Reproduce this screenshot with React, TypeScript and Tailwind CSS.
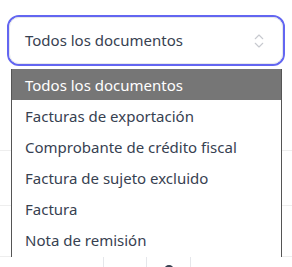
import { ChevronsUpDown } from 'lucide-react';

const options = [
  'Todos los documentos',
  'Facturas de exportación',
  'Comprobante de crédito fiscal',
  'Factura de sujeto excluido',
  'Factura',
  'Nota de remisión',
];

export default function App() {
  return (
    <div className="relative h-[267px] w-[292px] overflow-hidden bg-white font-['Noto_Sans',sans-serif]">
      <div className="pt-[15px] px-[7px]">
        <div className="h-[51px] rounded-[12px] border-2 border-[#6366f1]">
          <div className="flex h-full items-center justify-between rounded-[10px] border border-[#e5e7eb] pl-[15px] pr-[14px]">
            <span className="text-[15px] text-[#374151]">Todos los documentos</span>
            <ChevronsUpDown className="h-[18px] w-[18px] text-[#c7c9cf]" strokeWidth={1.5} />
          </div>
        </div>
      </div>

      {/* table behind the open list */}
      <div className="mt-[84px] border-t border-[#eeeeee]" />
      <div className="mt-[54px] border-t border-[#eeeeee]" />
      <div className="mt-[50px] flex border-t border-[#eeeeee] pl-[103px]">
        <div className="flex h-[12px] w-[44px] items-end justify-center border-x border-[#e5e7eb]">
          <span className="mb-[-4px] h-[6px] w-[8px] rounded-full border-2 border-[#6b7280]" />
        </div>
        <div className="flex h-[12px] w-[44px] items-end justify-center border-r border-[#e5e7eb]">
          <span className="mb-[-6px] h-[10px] w-[10px] rounded-full bg-[#374151]" />
        </div>
      </div>

      <ul className="absolute left-[11px] top-[69px] w-[271px] border-x border-[#555555] bg-white pb-[2px] text-[15px] text-[#374151]">
        {options.map((o, i) => (
          <li
            key={o}
            className={`flex h-[31px] items-center pl-[13px] pt-[2px] ${i === 0 ? 'bg-[#767676] text-white' : ''}`}
          >
            {o}
          </li>
        ))}
      </ul>
    </div>
  );
}
